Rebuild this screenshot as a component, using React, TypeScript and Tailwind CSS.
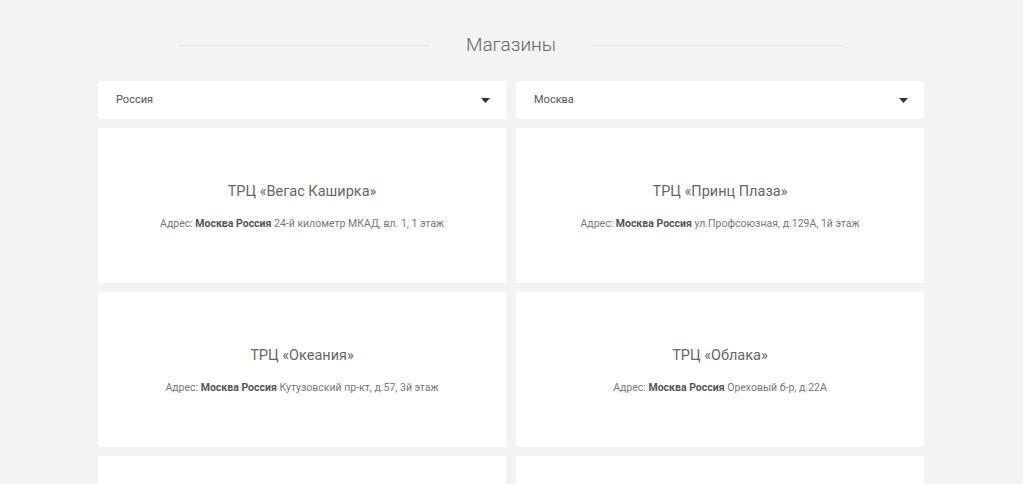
import React from 'react';

const stores = [
  { name: 'ТРЦ «Вегас Каширка»', addr: '24-й километр МКАД, вл. 1, 1 этаж' },
  { name: 'ТРЦ «Принц Плаза»', addr: 'ул.Профсоюзная, д.129А, 1й этаж' },
  { name: 'ТРЦ «Океания»', addr: 'Кутузовский пр-кт, д.57, 3й этаж' },
  { name: 'ТРЦ «Облака»', addr: 'Ореховый б-р, д.22А' },
  { name: '', addr: '' },
  { name: '', addr: '' },
];

const Select: React.FC<{ value: string }> = ({ value }) => (
  <div className="flex h-[38px] items-center justify-between bg-white pl-[18px] pr-[16px]">
    <span className="text-[11px] text-[#555]">{value}</span>
    <svg width="9" height="5" viewBox="0 0 9 5">
      <path d="M0 0h9L4.5 5z" fill="#333" />
    </svg>
  </div>
);

export default function App() {
  return (
    <div
      className="h-[484px] overflow-hidden bg-[#f3f3f3]"
      style={{ fontFamily: 'Roboto, "Open Sans", sans-serif' }}
    >
      <div className="ml-[98px] w-[826px]">
        <div className="flex h-[81px] items-center justify-center pt-[9px]">
          <div className="h-px w-[252px] bg-[#e4e4e4]" />
          <h2 className="w-[162px] text-center text-[19px] font-light text-[#666]">Магазины</h2>
          <div className="h-px w-[252px] bg-[#e4e4e4]" />
        </div>
        <div className="grid grid-cols-2 gap-x-[10px]">
          <Select value="Россия" />
          <Select value="Москва" />
        </div>
        <div className="mt-[9px] grid grid-cols-2 gap-x-[10px] gap-y-[9px]">
          {stores.map((s, i) => (
            <div key={i} className="flex h-[155px] flex-col items-center justify-center bg-white pt-[2px]">
              {s.name && (
                <>
                  <div className="text-[14.5px] text-[#666]">{s.name}</div>
                  <div className="mt-[13px] text-[10.5px] text-[#777]">
                    Адрес: <b className="font-bold text-[#555]">Москва Россия</b> {s.addr}
                  </div>
                </>
              )}
            </div>
          ))}
        </div>
      </div>
    </div>
  );
}
